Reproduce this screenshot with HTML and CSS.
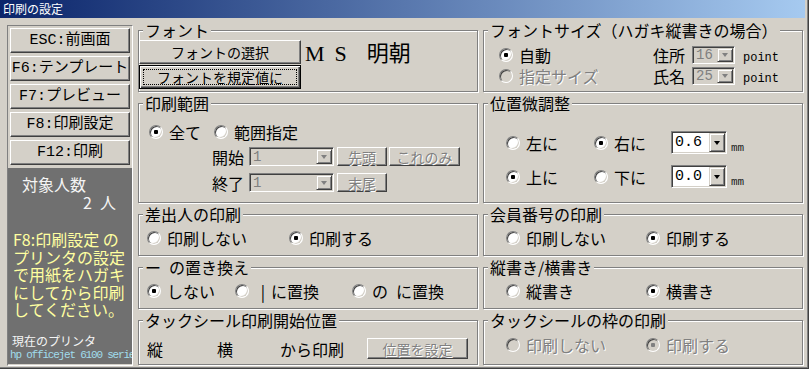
FILE: index.html
```html
<!DOCTYPE html>
<html lang="ja">
<head>
    <meta charset="UTF-8">
    <title>印刷の設定</title>
    <link rel="stylesheet" href="styles.css">
</head>
<body>
    <div class="window">
        <div class="titlebar">印刷の設定</div>

        <div class="content">
            <aside class="side">
                <div class="side-frame">
                    <button class="btn side-btn">ESC:前画面</button>
                    <button class="btn side-btn">F6:テンプレート</button>
                    <button class="btn side-btn">F7:プレビュー</button>
                    <button class="btn side-btn">F8:印刷設定</button>
                    <button class="btn side-btn">F12:印刷</button>
                    <div class="info">
                        <div class="count-label">対象人数</div>
                        <div class="count">2&ensp;人</div>
                        <div class="note">F8:印刷設定 の<br>プリンタの設定<br>で用紙をハガキ<br>にしてから印刷<br>してください。</div>
                        <div class="printer-label">現在のプリンタ</div>
                        <div class="printer-name">hp officejet 6100 series</div>
                    </div>
                </div>
            </aside>

            <main class="groups">
                <!-- フォント -->
                <fieldset class="grp">
                    <legend>フォント</legend>
                    <div class="font-row">
                        <div class="font-btns">
                            <button class="btn btn-font">フォントの選択</button>
                            <button class="btn btn-font default">フォントを規定値に</button>
                        </div>
                        <div class="face-name"><span class="face-latin">MS</span><span class="face-jp">明朝</span></div>
                    </div>
                </fieldset>

                <!-- フォントサイズ -->
                <fieldset class="grp">
                    <legend>フォントサイズ（ハガキ縦書きの場合）</legend>
                    <div class="size-grid">
                        <span class="radio checked">自動</span>
                        <span class="lbl">住所</span>
                        <div class="combo off size-combo"><span class="val">16</span><span class="arrow"></span></div>
                        <span class="unit">point</span>

                        <span class="radio disabled">指定サイズ</span>
                        <span class="lbl">氏名</span>
                        <div class="combo off size-combo"><span class="val">25</span><span class="arrow"></span></div>
                        <span class="unit">point</span>
                    </div>
                </fieldset>

                <!-- 印刷範囲 -->
                <fieldset class="grp">
                    <legend>印刷範囲</legend>
                    <div class="range">
                        <div class="range-opts">
                            <span class="radio checked w-all">全て</span>
                            <span class="radio">範囲指定</span>
                        </div>
                        <div class="range-line">
                            <span class="range-lbl">開始</span>
                            <div class="combo off range-combo"><span class="val">1</span><span class="arrow"></span></div>
                            <button class="btn off btn-first">先頭</button>
                            <button class="btn off btn-only">これのみ</button>
                        </div>
                        <div class="range-line second">
                            <span class="range-lbl">終了</span>
                            <div class="combo off range-combo"><span class="val">1</span><span class="arrow"></span></div>
                            <button class="btn off btn-first">末尾</button>
                        </div>
                    </div>
                </fieldset>

                <!-- 位置微調整 -->
                <fieldset class="grp">
                    <legend>位置微調整</legend>
                    <div class="adjust">
                        <div class="adjust-line">
                            <span class="radio w-left">左に</span>
                            <span class="radio checked w-right">右に</span>
                            <div class="combo adj-combo"><span class="val">0.6</span><span class="arrow"></span></div>
                            <span class="mm">mm</span>
                        </div>
                        <div class="adjust-line">
                            <span class="radio checked w-left">上に</span>
                            <span class="radio w-right">下に</span>
                            <div class="combo adj-combo"><span class="val">0.0</span><span class="arrow"></span></div>
                            <span class="mm">mm</span>
                        </div>
                    </div>
                </fieldset>

                <!-- 差出人の印刷 -->
                <fieldset class="grp">
                    <legend>差出人の印刷</legend>
                    <div class="opts opts-l">
                        <span class="radio w-l">印刷しない</span>
                        <span class="radio checked">印刷する</span>
                    </div>
                </fieldset>

                <!-- 会員番号の印刷 -->
                <fieldset class="grp">
                    <legend>会員番号の印刷</legend>
                    <div class="opts opts-r">
                        <span class="radio w-r">印刷しない</span>
                        <span class="radio checked">印刷する</span>
                    </div>
                </fieldset>

                <!-- ーの置き換え -->
                <fieldset class="grp">
                    <legend>ー&ensp;の置き換え</legend>
                    <div class="opts opts-l">
                        <span class="radio checked w-none">しない</span>
                        <span class="radio w-bar"><span class="bar">|</span>に置換</span>
                        <span class="radio">の&ensp;に置換</span>
                    </div>
                </fieldset>

                <!-- 縦書き/横書き -->
                <fieldset class="grp">
                    <legend>縦書き/横書き</legend>
                    <div class="opts opts-r">
                        <span class="radio w-r">縦書き</span>
                        <span class="radio checked">横書き</span>
                    </div>
                </fieldset>

                <!-- タックシール印刷開始位置 -->
                <fieldset class="grp">
                    <legend>タックシール印刷開始位置</legend>
                    <div class="tack">
                        <span class="tack-v">縦</span>
                        <span class="tack-h">横</span>
                        <span class="tack-from">から印刷</span>
                        <button class="btn off btn-pos">位置を設定</button>
                    </div>
                </fieldset>

                <!-- タックシールの枠の印刷 -->
                <fieldset class="grp">
                    <legend>タックシールの枠の印刷</legend>
                    <div class="opts opts-r tack-frame">
                        <span class="radio disabled w-r">印刷しない</span>
                        <span class="radio checked disabled">印刷する</span>
                    </div>
                </fieldset>
            </main>
        </div>
    </div>
</body>
</html>
```

FILE: styles.css
```css
:root {
    --face: #d4d0c8;
    --shadow: #808080;
    --dark: #404040;
    --light: #ffffff;
}

* {
    box-sizing: border-box;
}

body {
    margin: 0;
    background: var(--face);
    color: #000;
    font-family: "Noto Sans CJK JP", sans-serif;
    font-size: 16px;
    line-height: 16px;
}

.window {
    width: 809px;
    height: 369px;
    display: flex;
    flex-direction: column;
    background: var(--face);
    padding: 0 3px 2px 0;
    border-right: 1px solid var(--dark);
    border-bottom: 1px solid var(--dark);
    box-shadow: inset -1px -1px 0 var(--shadow);
    overflow: hidden;
}

.titlebar {
    flex: none;
    height: 18px;
    padding-left: 3px;
    background: linear-gradient(to right, #0a246a, #a6caf0);
    color: #fff;
    font-size: 12px;
    line-height: 18px;
}

.content {
    flex: 1;
    display: flex;
    min-height: 0;
}

/* 左側 */
.side {
    width: 133px;
    flex: none;
    display: flex;
    padding: 7px 0 0 7px;
}

.side-frame {
    width: 126px;
    display: flex;
    flex-direction: column;
    gap: 3px;
    padding-top: 2px;
    border: 1px solid;
    border-color: var(--shadow) var(--light) var(--light) var(--shadow);
}

.btn {
    margin: 0;
    padding: 0;
    background: var(--face);
    color: #000;
    font-family: "Noto Sans CJK JP", sans-serif;
    font-size: 14px;
    line-height: 16px;
    border: 1px solid;
    border-color: var(--light) var(--dark) var(--dark) var(--light);
    box-shadow: inset -1px -1px 0 var(--shadow);
}

.btn.default {
    border-color: #000;
    box-shadow: inset 1px 1px 0 var(--light), inset -1px -1px 0 var(--dark), inset -2px -2px 0 var(--shadow);
    outline: 1px dotted #000;
    outline-offset: -5px;
}

.btn.off {
    color: var(--shadow);
    text-shadow: 1px 1px 0 var(--light);
}

.side-btn {
    height: 25px;
    margin: 0 2px;
    font-family: "Liberation Mono", "Noto Sans CJK JP", monospace;
    font-size: 15px;
}

.info {
    flex: 1;
    display: flex;
    flex-direction: column;
    margin-bottom: 1px;
    padding: 8px 0 2px;
    background: #707070;
    color: #f4f4f4;
}

.count-label {
    padding-left: 14px;
}

.count {
    margin-top: 2px;
    padding-right: 16px;
    text-align: right;
}

.note {
    margin-top: 21px;
    padding-left: 5px;
    color: #ffffa0;
    line-height: 17.5px;
}

.printer-label {
    margin-top: auto;
    padding-left: 4px;
    font-size: 12px;
    line-height: 14px;
}

.printer-name {
    padding-left: 2px;
    color: #a0dcec;
    font-family: "Liberation Mono", monospace;
    font-size: 11px;
    line-height: 14px;
    letter-spacing: -1.2px;
    white-space: nowrap;
    overflow: hidden;
}

/* グループ */
.groups {
    margin-left: 5px;
    padding-top: 4px;
    display: grid;
    grid-template-columns: 340px 320px;
    grid-template-rows: 70px 108px 50px 50px 53px;
    column-gap: 5px;
    row-gap: 3px;
}

.grp {
    margin: 0;
    padding: 0;
    min-width: 0;
    border: 1px solid var(--shadow);
    box-shadow: inset 1px 1px 0 var(--light), 1px 1px 0 var(--light);
}

.grp legend {
    margin-left: 4px;
    padding: 0 2px;
    background: var(--face);
    font-size: 16px;
    line-height: 16px;
}

/* ラジオボタン */
.radio {
    display: inline-flex;
    align-items: center;
    gap: 6px;
    white-space: nowrap;
}

.radio::before {
    content: "";
    flex: none;
    width: 12px;
    height: 12px;
    border-radius: 50%;
    background: #fff;
    border: 1px solid;
    border-color: var(--shadow) var(--light) var(--light) var(--shadow);
    box-shadow: inset 1px 1px 0 var(--dark), inset -1px -1px 0 var(--face);
}

.radio.checked::before {
    background: radial-gradient(circle, #000 0 2px, #fff 2.5px);
}

.radio.disabled {
    color: var(--shadow);
    text-shadow: 1px 1px 0 var(--light);
}

.radio.disabled::before {
    background: var(--face);
}

.radio.checked.disabled::before {
    background: radial-gradient(circle, var(--shadow) 0 2px, var(--face) 2.5px);
}

.bar {
    width: 16px;
    text-align: center;
    margin-right: -6px;
}

/* コンボボックス */
.combo {
    display: flex;
    border: 1px solid;
    border-color: var(--shadow) var(--light) var(--light) var(--shadow);
    background: #fff;
    box-shadow: inset 1px 1px 0 var(--dark), inset -1px -1px 0 var(--face);
    padding: 1px;
}

.combo.off {
    background: var(--face);
    color: var(--shadow);
}

.combo .val {
    flex: 1;
    padding-left: 2px;
    display: flex;
    align-items: center;
    font-family: "Liberation Mono", monospace;
    font-size: 14px;
}

.combo .arrow {
    width: 16px;
    flex: none;
    display: flex;
    align-items: center;
    justify-content: center;
    background: var(--face);
    border: 1px solid;
    border-color: var(--face) var(--dark) var(--dark) var(--face);
    box-shadow: inset 1px 1px 0 var(--light), inset -1px -1px 0 var(--shadow);
}

.combo .arrow::after {
    content: "";
    border-left: 3.5px solid transparent;
    border-right: 3.5px solid transparent;
    border-top: 4px solid #000;
}

.combo.off .arrow::after {
    border-top-color: var(--shadow);
}

/* フォント */
.font-row {
    display: flex;
    margin-top: 2px;
}

.font-btns {
    display: flex;
    flex-direction: column;
    gap: 1px;
}

.btn-font {
    width: 162px;
    height: 24px;
}

.face-name {
    margin-left: 4px;
    font-size: 22px;
    line-height: 22px;
}

.face-latin {
    font-family: "Liberation Serif", serif;
    letter-spacing: 10px;
}

.face-jp {
    margin-left: 10px;
}

/* フォントサイズ */
.size-grid {
    display: grid;
    grid-template-columns: 154px 39px 43px auto;
    grid-template-rows: 21px 21px;
    align-items: center;
    padding: 6px 0 0 15px;
}

.size-combo {
    height: 18px;
}

.size-combo .val {
    font-size: 14px;
}

.unit {
    align-self: end;
    margin-left: 8px;
    font-family: "Liberation Mono", monospace;
    font-size: 12px;
    line-height: 14px;
}

/* 印刷範囲 */
.range {
    padding: 10px 0 0 10px;
}

.range-opts {
    display: flex;
    align-items: center;
    height: 22px;
}

.w-all {
    width: 65px;
}

.range-line {
    display: flex;
    align-items: center;
    height: 19px;
    margin: 4px 0 0 63px;
}

.range-line.second {
    margin-top: 7px;
}

.range-lbl {
    width: 37px;
}

.range-combo {
    width: 85px;
    height: 19px;
}

.btn-first {
    width: 50px;
    height: 19px;
    margin-left: 3px;
}

.btn-only {
    width: 71px;
    height: 19px;
    margin-left: 2px;
}

/* 位置微調整 */
.adjust {
    display: flex;
    flex-direction: column;
    gap: 11px;
    padding: 20px 0 0 22px;
}

.adjust-line {
    display: flex;
    align-items: center;
    height: 23px;
}

.w-left {
    width: 88px;
}

.w-right {
    width: 77px;
}

.adj-combo {
    width: 56px;
    height: 23px;
}

.adj-combo .val {
    font-size: 15px;
}

.mm {
    align-self: flex-end;
    margin-left: 4px;
    color: #202020;
    font-family: "Liberation Mono", monospace;
    font-size: 11px;
    line-height: 12px;
}

/* ラジオ行 */
.opts {
    display: flex;
    align-items: center;
    height: 20px;
    margin-top: 6px;
}

.opts-l {
    padding-left: 8px;
}

.opts-r {
    padding-left: 22px;
}

.w-l {
    width: 142px;
}

.w-r {
    width: 140px;
}

.w-none {
    width: 88px;
}

.w-bar {
    width: 117px;
}

.tack-frame {
    margin-top: 7px;
}

/* タックシール */
.tack {
    display: flex;
    align-items: center;
    height: 21px;
    margin-top: 10px;
    padding-left: 8px;
}

.tack-v {
    width: 70px;
}

.tack-h {
    width: 63px;
}

.tack-from {
    width: 87px;
}

.btn-pos {
    width: 101px;
    height: 21px;
}
```
